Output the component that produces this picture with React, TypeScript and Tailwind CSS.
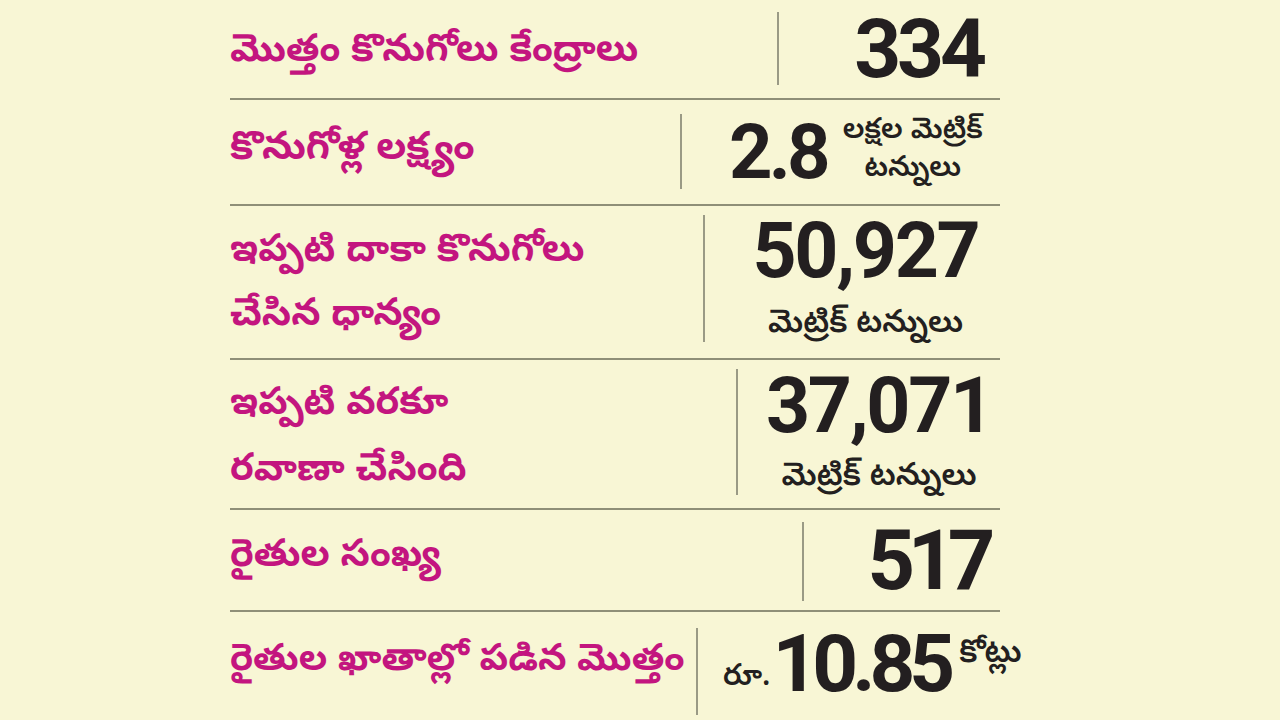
const te = '"Noto Sans Telugu", "Noto Sans", "Lato", sans-serif';
const num = '"Roboto", "Liberation Sans", sans-serif';

function Units({ children, className }: { children: React.ReactNode; className?: string }) {
  return (
    <div className={className} style={{ fontFamily: te }}>
      {children}
    </div>
  );
}

export default function App() {
  return (
    <div className="min-h-[720px] w-[1280px] overflow-hidden bg-[#f8f6d5]">
      <div className="ml-[230px] w-[770px]">
        {/* row 1 */}
        <div className="flex h-[100px] border-b-2 border-[#8f8f78]">
          <div className="flex flex-1 items-center pt-[8px] text-[38px] font-bold whitespace-nowrap text-[#c3157f]" style={{ fontFamily: te }}>
            మొత్తం కొనుగోలు కేంద్రాలు
          </div>
          <div className="mt-[12px] mb-[13px] w-[2px] shrink-0 bg-[#9a9a85]" />
          <div className="flex w-[221px] shrink-0 items-center justify-end pr-[17px]">
            <span className="text-[82px] font-bold leading-none tracking-[-0.05em] text-[#231f20]" style={{ fontFamily: num }}>
              334
            </span>
          </div>
        </div>

        {/* row 2 */}
        <div className="flex h-[106px] border-b-2 border-[#8f8f78]">
          <div className="flex flex-1 items-center text-[39px] font-bold whitespace-nowrap text-[#c3157f]" style={{ fontFamily: te }}>
            కొనుగోళ్ల లక్ష్యం
          </div>
          <div className="mt-[14px] mb-[15px] w-[2px] shrink-0 bg-[#9a9a85]" />
          <div className="flex w-[318px] shrink-0 items-center gap-[16px] pl-[47px]">
            <span className="text-[76px] font-bold leading-none tracking-[-0.05em] text-[#231f20]" style={{ fontFamily: num }}>
              2.8
            </span>
            <Units className="flex flex-col items-center text-[29px] font-semibold leading-[38px] whitespace-nowrap text-[#231f20]">
              <span>లక్షల మెట్రిక్</span>
              <span>టన్నులు</span>
            </Units>
          </div>
        </div>

        {/* row 3 */}
        <div className="flex h-[154px] border-b-2 border-[#8f8f78]">
          <div className="flex flex-1 flex-col justify-center pt-[8px] text-[38px] font-bold leading-[64px] whitespace-nowrap text-[#c3157f]" style={{ fontFamily: te }}>
            <span>ఇప్పటి దాకా కొనుగోలు</span>
            <span>చేసిన ధాన్యం</span>
          </div>
          <div className="mt-[9px] mb-[16px] w-[2px] shrink-0 bg-[#9a9a85]" />
          <div className="flex w-[295px] shrink-0 flex-col items-center pt-[5px] pl-[26px]">
            <span className="text-[77px] font-bold leading-[80px] tracking-[-0.03em] text-[#231f20]" style={{ fontFamily: num }}>
              50,927
            </span>
            <Units className="mt-[14px] text-[32px] font-semibold leading-[42px] whitespace-nowrap text-[#231f20]">
              మెట్రిక్ టన్నులు
            </Units>
          </div>
        </div>

        {/* row 4 */}
        <div className="flex h-[150px] border-b-2 border-[#8f8f78]">
          <div className="flex flex-1 flex-col justify-center pt-[12px] text-[38px] font-bold leading-[66px] whitespace-nowrap text-[#c3157f]" style={{ fontFamily: te }}>
            <span>ఇప్పటి వరకూ</span>
            <span>రవాణా చేసింది</span>
          </div>
          <div className="mt-[9px] mb-[13px] w-[2px] shrink-0 bg-[#9a9a85]" />
          <div className="flex w-[262px] shrink-0 flex-col items-center pt-[6px] pl-[20px]">
            <span className="text-[77px] font-bold leading-[80px] tracking-[-0.03em] text-[#231f20]" style={{ fontFamily: num }}>
              37,071
            </span>
            <Units className="mt-[12px] text-[32px] font-semibold leading-[42px] whitespace-nowrap text-[#231f20]">
              మెట్రిక్ టన్నులు
            </Units>
          </div>
        </div>

        {/* row 5 */}
        <div className="flex h-[102px] border-b-2 border-[#8f8f78]">
          <div className="flex flex-1 items-center pb-[4px] text-[38px] font-bold whitespace-nowrap text-[#c3157f]" style={{ fontFamily: te }}>
            రైతుల సంఖ్య
          </div>
          <div className="mt-[12px] mb-[9px] w-[2px] shrink-0 bg-[#9a9a85]" />
          <div className="flex w-[196px] shrink-0 items-center justify-end pr-[12px]">
            <span className="text-[83px] font-bold leading-none tracking-[-0.09em] text-[#231f20]" style={{ fontFamily: num }}>
              517
            </span>
          </div>
        </div>

        {/* row 6 */}
        <div className="flex h-[108px]">
          <div className="flex flex-1 items-center pb-[4px] text-[37px] font-bold whitespace-nowrap text-[#c3157f]" style={{ fontFamily: te }}>
            రైతుల ఖాతాల్లో పడిన మొత్తం
          </div>
          <div className="mt-[16px] mb-[5px] w-[2px] shrink-0 bg-[#9a9a85]" />
          <div className="flex w-[302px] shrink-0 items-center pl-[25px] pb-[4px]">
            <Units className="self-end pb-[14px] text-[30px] font-semibold text-[#231f20]">రూ.</Units>
            <span className="ml-[2px] text-[80px] font-bold leading-none tracking-[-0.075em] text-[#231f20]" style={{ fontFamily: num }}>
              10.85
            </span>
            <Units className="ml-[10px] self-start pt-[20px] text-[32px] font-semibold whitespace-nowrap text-[#231f20]">
              కోట్లు
            </Units>
          </div>
        </div>
      </div>
    </div>
  );
}
